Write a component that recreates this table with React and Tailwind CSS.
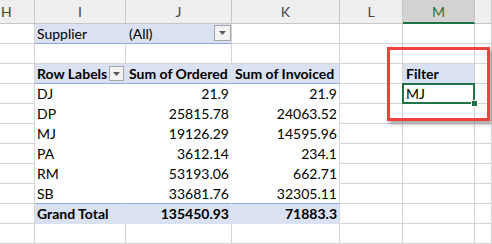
import React from "react";

const GRID = "border-[#d4d4d4]";
const cols = ["H", "I", "J", "K", "L", "M", "N"];
const widths = ["w-[35px]", "w-[91px]", "w-[106px]", "w-[108px]", "w-[63px]", "w-[72px]", "w-[17px]"];

const rows = [
  ["DJ", "21.9", "21.9"],
  ["DP", "25815.78", "24063.52"],
  ["MJ", "19126.29", "14595.96"],
  ["PA", "3612.14", "234.1"],
  ["RM", "53193.06", "662.71"],
  ["SB", "33681.76", "32305.11"],
];

function DropButton({ className }) {
  return (
    <div
      className={`flex items-center justify-center border border-[#a6a6a6] bg-[#f3f3f3] ${className}`}
    >
      <svg width="7" height="4" viewBox="0 0 7 4">
        <path d="M0 0h7L3.5 4z" fill="#595959" />
      </svg>
    </div>
  );
}

// a plain worksheet cell with gridlines on the right and bottom
function Cell({ i, className = "", children }) {
  return (
    <div
      className={`relative h-full shrink-0 border-r border-b ${GRID} ${widths[i]} ${className}`}
    >
      {children}
    </div>
  );
}

function Row({ children }) {
  return <div className="flex h-[20px]">{children}</div>;
}

const PIV = "bg-[#d9e1f2]";
const BLUE = "border-b-[#8ea9db]";

export default function App() {
  return (
    <div
      className="relative h-[244px] w-[492px] overflow-hidden bg-white text-[14px] text-black"
      style={{ fontFamily: "Lato, 'Open Sans', sans-serif" }}
    >
      {/* column headers; N is too narrow to show its letter */}
      <div className="flex h-[24px]">
        {cols.map((c, i) => (
          <div
            key={c}
            className={`flex shrink-0 items-center justify-center border-r border-b ${widths[i]} ${
              c === "M"
                ? "border-b-2 border-r-[#c6c6c6] border-b-[#217346] bg-[#d2d2d2] text-[#217346]"
                : "border-[#c6c6c6] bg-[#efefef] text-[#444]"
            } ${c === "H" ? "justify-start pl-[1px]" : ""}`}
          >
            {c === "N" ? "" : c}
          </div>
        ))}
      </div>

      {/* report filter */}
      <Row>
        <Cell i={0} />
        <Cell i={1} className={`${PIV} ${BLUE} border-r-[#d9e1f2] flex items-center pl-[2px]`}>
          Supplier
        </Cell>
        <Cell i={2} className={`${PIV} ${BLUE} flex items-center justify-between pl-[3px]`}>
          <span>(All)</span>
          <DropButton className="mb-[1px] h-[16px] w-[17px]" />
        </Cell>
        <Cell i={3} />
        <Cell i={4} />
        <Cell i={5} />
        <Cell i={6} />
      </Row>

      <Row>
        {cols.map((c, i) => (
          <Cell key={c} i={i} />
        ))}
      </Row>

      {/* pivot header */}
      <Row>
        <Cell i={0} />
        <Cell i={1} className={`${PIV} ${BLUE} border-r-[#d9e1f2] flex items-center justify-between pl-[2px] font-bold`}>
          <span>Row Labels</span>
          <DropButton className="mr-px h-[15px] w-[15px]" />
        </Cell>
        <Cell i={2} className={`${PIV} ${BLUE} border-r-[#d9e1f2] flex items-center pl-[3px] font-bold whitespace-nowrap`}>
          Sum of Ordered
        </Cell>
        <Cell i={3} className={`${PIV} ${BLUE} flex items-center pl-[3px] font-bold whitespace-nowrap`}>
          Sum of Invoiced
        </Cell>
        <Cell i={4} />
        <Cell i={5} className={`${PIV} flex items-center pl-[3px] font-bold`}>
          Filter
        </Cell>
        <Cell i={6} />
      </Row>

      {rows.map(([label, ordered, invoiced], r) => {
        const last = r === rows.length - 1;
        const bottom = last ? BLUE : "border-b-white";
        return (
          <Row key={label}>
            <Cell i={0} />
            <Cell i={1} className={`${bottom} border-r-white flex items-center pl-[2px]`}>
              {label}
            </Cell>
            <Cell i={2} className={`${bottom} border-r-white flex items-center justify-end pr-[2px]`}>
              {ordered}
            </Cell>
            <Cell i={3} className={`${bottom} flex items-center justify-end pr-[2px]`}>
              {invoiced}
            </Cell>
            <Cell i={4} />
            <Cell i={5} className={r === 0 ? "z-10 flex items-center pl-[3px]" : ""}>
              {r === 0 && (
                <>
                  <span>MJ</span>
                  <div className="absolute -bottom-px -left-px -right-px -top-px border-2 border-[#217346]" />
                  <div className="absolute -bottom-[4px] -right-[4px] h-[7px] w-[7px] border border-white bg-[#217346]" />
                </>
              )}
            </Cell>
            <Cell i={6} />
          </Row>
        );
      })}

      {/* grand total */}
      <Row>
        <Cell i={0} />
        <Cell i={1} className={`${PIV} border-b-[#d9e1f2] border-r-[#d9e1f2] flex items-center pl-[2px] font-bold`}>
          Grand Total
        </Cell>
        <Cell i={2} className={`${PIV} border-b-[#d9e1f2] border-r-[#d9e1f2] flex items-center justify-end pr-[2px] font-bold`}>
          135450.93
        </Cell>
        <Cell i={3} className={`${PIV} border-b-[#d9e1f2] flex items-center justify-end pr-[2px] font-bold`}>
          71883.3
        </Cell>
        <Cell i={4} />
        <Cell i={5} />
        <Cell i={6} />
      </Row>

      <Row>
        {cols.map((c, i) => (
          <Cell key={c} i={i} />
        ))}
      </Row>

      {/* highlight frame around the filter cells */}
      <div className="pointer-events-none absolute z-20 left-[387px] top-[47px] h-[74px] w-[103px] border-[3px] border-[#ef4040] shadow-[2px_3px_4px_rgba(0,0,0,0.35)]" />
    </div>
  );
}
